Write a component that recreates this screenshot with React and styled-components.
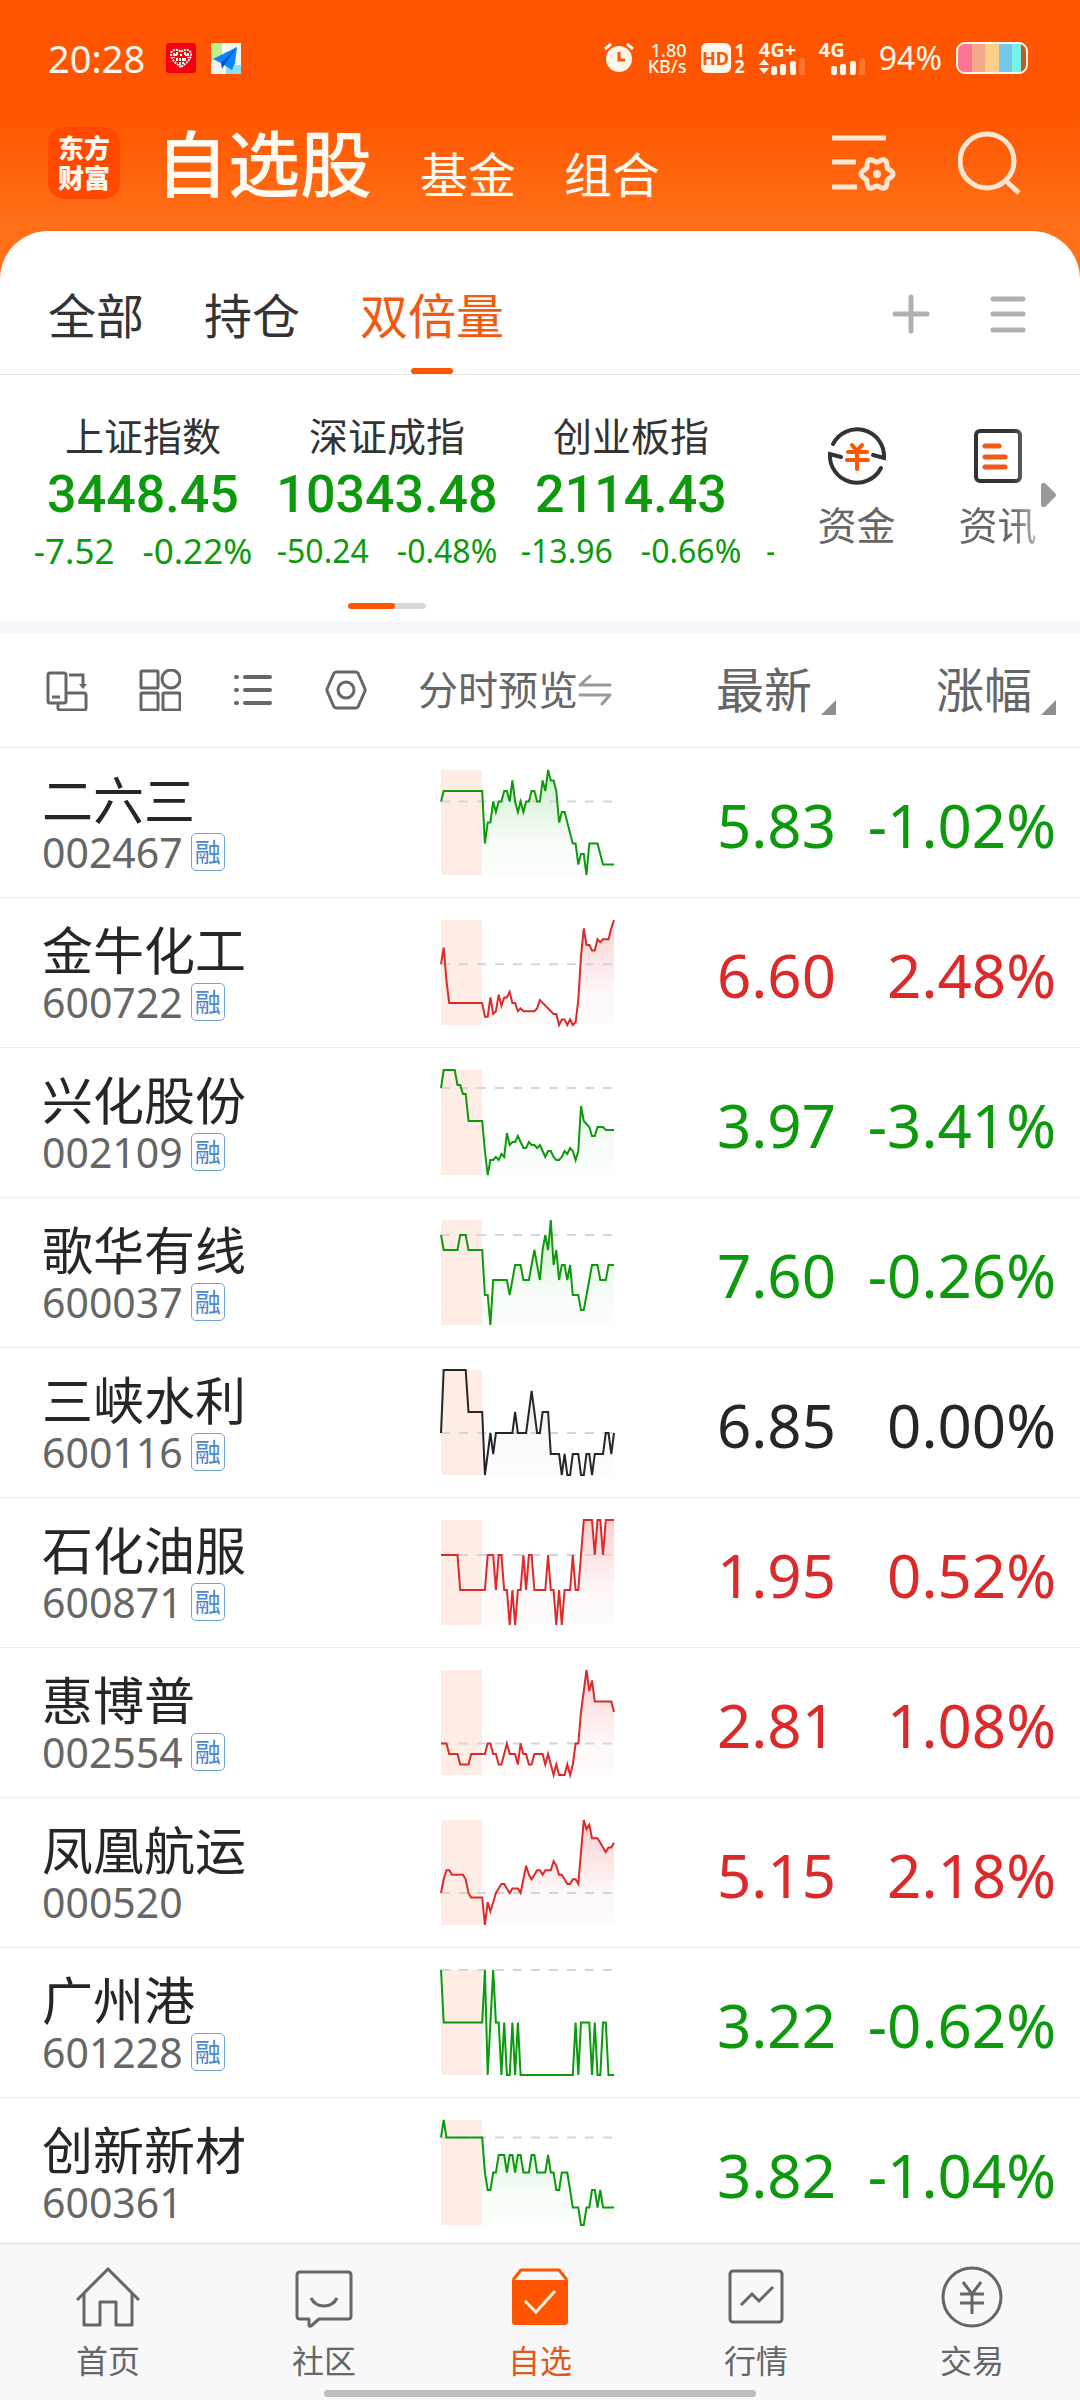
import React, { useId } from "react";
import styled, { createGlobalStyle } from "styled-components";

const GREEN = "#0c9a0c";
const RED = "#dc2a2a";
const INK = "#262626";
const GREY = "#666666";
const ORANGE = "#ff5500";
const TONES = { down: GREEN, up: RED, flat: INK };

const GlobalStyle = createGlobalStyle`
  *, *::before, *::after { box-sizing: border-box; }
  body {
    margin: 0;
    background: #fff;
    color: ${INK};
    font-family: "Noto Sans", "Noto Sans CJK SC", sans-serif;
  }
  button {
    margin: 0;
    padding: 0;
    border: 0;
    background: none;
    color: inherit;
    font: inherit;
    cursor: pointer;
  }
  a { color: inherit; text-decoration: none; }
  svg { display: block; flex: none; }
`;

const Screen = styled.div`
  display: flex;
  flex-direction: column;
  height: 100vh;
  background: linear-gradient(#ff5500 0, #ff5500 112px, #ff7018 224px);
`;

/* ---------- status bar ---------- */

const StatusBar = styled.div`
  display: flex;
  align-items: center;
  height: 116px;
  padding: 0 52px 0 48px;
  color: #fff6ec;
`;

const Clock = styled.span`
  margin-right: 21px;
  font-size: 38px;
  line-height: 40px;
`;

const NoticeIcons = styled.div`
  display: flex;
  flex: 1;
  gap: 15px;
`;

const StatusItems = styled.div`
  display: flex;
  align-items: center;
  gap: 14px;
`;

const TinyStack = styled.div`
  display: flex;
  flex-direction: column;
  align-items: ${(p) => p.$align || "flex-end"};
  font-size: ${(p) => p.$size || 18}px;
  line-height: 16px;
  font-weight: ${(p) => (p.$bold ? 700 : 500)};
`;

const HdGroup = styled.div`
  display: flex;
  align-items: center;
  gap: 4px;
`;

const HdBox = styled.span`
  width: 30px;
  height: 30px;
  border-radius: 6px;
  background: #fff6ec;
  color: ${ORANGE};
  font-size: 18px;
  font-weight: 700;
  line-height: 30px;
  text-align: center;
`;

const Percent = styled.span`
  font-size: 32px;
  line-height: 40px;
`;

/* ---------- title bar ---------- */

const TitleBar = styled.header`
  display: flex;
  align-items: flex-end;
  height: 115px;
  padding: 0 58px 32px 48px;
  color: #fffaf2;
`;

const Brand = styled.div`
  width: 72px;
  height: 72px;
  margin-right: 36px;
  padding: 6px 0;
  border-radius: 16px;
  background: #ff4800;
  font-size: 26px;
  font-weight: 900;
  line-height: 30px;
  text-align: center;
`;

const Sections = styled.nav`
  display: flex;
  flex: 1;
  align-items: flex-end;
  gap: 48px;
`;

const Section = styled.button`
  font-size: ${(p) => (p.$current ? 72 : 48)}px;
  font-weight: ${(p) => (p.$current ? 500 : 400)};
  line-height: ${(p) => (p.$current ? 72 : 48)}px;
  white-space: nowrap;
`;

const TitleActions = styled.div`
  display: flex;
  align-items: center;
  gap: 62px;
  height: 72px;
  color: #ffe6d2;
`;

/* ---------- white sheet ---------- */

const Sheet = styled.main`
  display: flex;
  flex: 1;
  flex-direction: column;
  min-height: 0;
  overflow: hidden;
  border-radius: 48px 48px 0 0;
  background: #fff;
`;

const GroupBar = styled.div`
  display: flex;
  flex: none;
  align-items: center;
  height: 144px;
  padding: 0 54px 0 48px;
  border-bottom: 1px solid #e4e4e4;
`;

const Groups = styled.div`
  display: flex;
  flex: 1;
  align-self: stretch;
  gap: 60px;
`;

const Group = styled.button`
  display: flex;
  flex-direction: column;
  align-items: center;
  justify-content: flex-end;
  color: ${(p) => (p.$current ? "#f25a12" : "#333333")};
  font-size: 48px;
  line-height: 60px;
  white-space: nowrap;

  &::after {
    content: "";
    width: 42px;
    height: 6px;
    margin-top: 22px;
    border-radius: 3px;
    background: ${(p) => (p.$current ? ORANGE : "transparent")};
  }
`;

const GroupActions = styled.div`
  display: flex;
  align-items: center;
  gap: 60px;
  padding-top: 22px;
`;

/* ---------- indices ---------- */

const Overview = styled.section`
  display: flex;
  flex: none;
  height: 258px;
  border-bottom: 12px solid #f5f6f9;
`;

const IndexPane = styled.div`
  flex: 1;
  min-width: 0;
  padding-top: 38px;
  overflow: hidden;
`;

const IndexStrip = styled.div`
  display: flex;
  padding-left: 21px;
`;

const IndexCard = styled.div`
  display: flex;
  flex: 0 0 244px;
  flex-direction: column;
  align-items: center;
  gap: 5px;
  color: ${GREEN};
  white-space: nowrap;
`;

const IndexName = styled.span`
  color: #333333;
  font-size: 39px;
  line-height: 46px;
`;

const IndexValue = styled.span`
  font-family: Roboto, "Noto Sans", sans-serif;
  font-size: 52px;
  font-weight: 500;
  line-height: 62px;
`;

const IndexChange = styled.span`
  display: flex;
  gap: 28px;
  font-size: ${(p) => (p.$large ? 35 : 32)}px;
  line-height: 40px;
`;

const NextCard = styled.div`
  display: flex;
  flex: none;
  align-items: flex-end;
  width: 21px;
  padding-left: 13px;
  overflow: hidden;
  color: ${GREEN};
  font-size: 32px;
  line-height: 40px;
`;

const Pager = styled.div`
  display: flex;
  width: 78px;
  height: 6px;
  margin: 32px auto 0;
  overflow: hidden;
  border-radius: 3px;
  background: #d5d8dd;

  &::before {
    content: "";
    width: 60%;
    border-radius: 3px;
    background: ${ORANGE};
  }
`;

const Shortcuts = styled.div`
  position: relative;
  display: flex;
  flex: none;
  padding: 48px 12px 0;
`;

const Shortcut = styled.a`
  display: flex;
  flex-direction: column;
  align-items: center;
  gap: 13px;
  width: 141px;
  color: ${GREY};
  font-size: 39px;
  line-height: 46px;
  ${(p) =>
    p.$fading &&
    "mask-image: linear-gradient(to right, #000 60%, rgba(0, 0, 0, 0.4) 82%);"}
`;

const MoreArrow = styled.button`
  position: absolute;
  top: 108px;
  right: 24px;
  color: #999999;
`;

/* ---------- stock table ---------- */

const Stocks = styled.div`
  flex: 1;
  min-height: 0;
  overflow: hidden;
`;

const Table = styled.table`
  width: 100%;
  border-spacing: 0;
  table-layout: fixed;
`;

const HeadCell = styled.th`
  width: ${(p) => p.$width || "auto"};
  height: 115px;
  padding: 0 ${(p) => p.$right || 0}px 0 ${(p) => p.$left || 0}px;
  border-bottom: 1px solid #ececec;
  color: ${GREY};
  font-weight: 400;
  text-align: left;
`;

const Tools = styled.div`
  display: flex;
  gap: 51px;
`;

const PreviewToggle = styled.button`
  display: flex;
  align-items: center;
  font-size: 40px;
  line-height: 50px;
  white-space: nowrap;
`;

const SortButton = styled.button`
  display: flex;
  align-items: flex-end;
  gap: 9px;
  margin-left: auto;
  font-size: 48px;
  line-height: 50px;
  white-space: nowrap;

  &::after {
    content: "";
    width: 15px;
    height: 15px;
    background: #8e8e93;
    clip-path: polygon(100% 0, 100% 100%, 0 100%);
  }
`;

const Cell = styled.td`
  height: 150px;
  padding: 6px 0 0;
  border-bottom: 1px solid #ececec;
  vertical-align: middle;
`;

const NameCell = styled(Cell)`
  padding-left: 42px;
`;

const ChartCell = styled(Cell)`
  padding: 0 0 0 23px;
`;

const NumberCell = styled(Cell)`
  padding: 4px ${(p) => p.$right || 0}px 0 0;
  color: ${(p) => TONES[p.$tone]};
  font-size: 60px;
  line-height: 72px;
  text-align: right;
  white-space: nowrap;
`;

const StockName = styled.div`
  font-size: 51px;
  line-height: 52px;
`;

const StockCode = styled.div`
  display: flex;
  align-items: center;
  gap: 8px;
  color: ${GREY};
  font-size: 41px;
  line-height: 52px;
`;

const MarginTag = styled.span`
  width: 34px;
  height: 38px;
  border: 1px solid #6ea3da;
  border-radius: 5px;
  color: #4a86cc;
  font-size: 26px;
  line-height: 36px;
  text-align: center;
`;

/* ---------- bottom navigation ---------- */

const BottomBar = styled.footer`
  flex: none;
  height: 157px;
  padding-top: 21px;
  border-top: 1px solid #e2e2e4;
  background: #f8f8fa;
`;

const BottomNav = styled.nav`
  display: grid;
  grid-template-columns: repeat(5, 1fr);
`;

const NavLink = styled.a`
  display: flex;
  flex-direction: column;
  align-items: center;
  gap: 12px;
  color: ${(p) => (p.$current ? "#e2581a" : GREY)};
  font-size: 32px;
  line-height: 40px;
`;

const HomeHandle = styled.div`
  width: 40%;
  height: 7px;
  margin: 9px auto 0;
  border-radius: 4px;
  background: #bdbdbd;
`;

/* ---------- icons ---------- */

const Icon = ({ w, h, sw = 3, children, ...rest }) => (
  <svg
    width={w}
    height={h}
    viewBox={`0 0 ${w} ${h}`}
    fill="none"
    stroke="currentColor"
    strokeWidth={sw}
    aria-hidden="true"
    {...rest}
  >
    {children}
  </svg>
);

const HeartAppIcon = () => (
  <Icon w={30} h={30} sw={2}>
    <rect width="30" height="30" rx="3" fill="#f2000d" stroke="none" />
    <path
      d="M15 24C9 20 5 16 5 11C5 7 11 5 15 9C19 5 25 7 25 11C25 16 21 20 15 24Z"
      stroke="#fff"
      strokeDasharray="2 1"
    />
    <path
      d="M8 10V15M11 9V13M11 15V19M14 12H16M14 15V22M17 15V21M19 9V13M19 15V18M22 10V15M8 12H11M19 12H23"
      stroke="#fff"
      strokeDasharray="3 1"
    />
  </Icon>
);

const MapAppIcon = () => (
  <Icon w={30} h={31} stroke="none">
    <rect width="30" height="31" fill="#f2f4f0" />
    <path d="M0 0H11V13L0 18Z" fill="#bdf08c" />
    <path d="M15 22H30V31H15Z" fill="#8ae0fa" />
    <path d="M11 0H14V31H11Z" fill="#fff" />
    <path d="M26 4L2 16L10 20L21 27L24 20Z" fill="#0a84ff" />
    <path d="M26 4L10 20L11 26L14 21Z" fill="#0654c8" />
  </Icon>
);

const AlarmIcon = () => (
  <Icon w={30} h={30}>
    <circle cx="15" cy="16" r="13" fill="currentColor" stroke="none" />
    <path d="M15 9V17H21" stroke={ORANGE} />
    <path d="M1 6L7 1M29 6L23 1" />
  </Icon>
);

const Bars = ({ arrows }) => (
  <Icon w={46} h={17} stroke="none" fill="currentColor">
    {arrows && <path d="M0 7L5 1L10 7ZM0 10L5 16L10 10Z" />}
    <g transform="translate(12 0)">
      <rect x="0" y="8" width="6" height="9" rx="2" />
      <rect x="9" y="6" width="6" height="11" rx="2" />
      <rect x="19" y="3" width="6" height="14" rx="2" />
      <rect x="28" y="0" width="6" height="17" rx="2" opacity="0.2" />
    </g>
  </Icon>
);

const BatteryIcon = () => (
  <Icon w={72} h={32} stroke="none">
    <clipPath id="cell">
      <rect x="2" y="2" width="68" height="28" rx="7" />
    </clipPath>
    <g clipPath="url(#cell)">
      <rect x="0" width="16" height="32" fill="#fb7592" />
      <rect x="16" width="13" height="32" fill="#f4a88a" />
      <rect x="29" width="14" height="32" fill="#fdd08a" />
      <rect x="43" width="13" height="32" fill="#74c6ea" />
      <rect x="56" width="9" height="32" fill="#74f4e6" />
      <rect x="65" width="7" height="32" fill="#bf5a2a" />
    </g>
    <rect x="1" y="1" width="70" height="30" rx="8" stroke="#fff6ec" strokeWidth="2" />
  </Icon>
);

const gearPath = (() => {
  const points = [];
  for (let i = 0; i <= 72; i += 1) {
    const a = (i / 72) * Math.PI * 2;
    const r = 14 + 2 * Math.cos(6 * a);
    points.push(`${(45 + r * Math.cos(a)).toFixed(1)} ${(40 + r * Math.sin(a)).toFixed(1)}`);
  }
  return `M${points.join("L")}Z`;
})();

const FilterIcon = () => (
  <Icon w={64} h={58} sw={5}>
    <path d="M0 4H54M0 28H24M0 53H25" />
    <path d={gearPath} strokeLinejoin="round" />
    <circle cx="45" cy="40" r="4" fill="currentColor" stroke="none" />
  </Icon>
);

const SearchIcon = () => (
  <Icon w={64} h={64} sw={5}>
    <circle cx="29" cy="30" r="27" />
    <path d="M47 49L61 62" />
  </Icon>
);

const PlusIcon = () => (
  <Icon w={38} h={40} sw={5} stroke="#b0b0b0" strokeLinecap="round">
    <path d="M19 3V37M3 20H35" />
  </Icon>
);

const MenuIcon = () => (
  <Icon w={36} h={40} sw={5} stroke="#b0b0b0" strokeLinecap="round">
    <path d="M3 5H33M3 20H33M3 36H33" />
  </Icon>
);

const FundsIcon = () => (
  <Icon w={66} h={66} sw={4} stroke="#333">
    <path d="M9 21A27 27 0 0 1 60 35L49 32" strokeLinecap="round" />
    <path d="M57 45A27 27 0 0 1 6 31L17 34" strokeLinecap="round" />
    <path d="M28 22L33 28L38 22M24 29H43M23 37H44M33 28V46" stroke={ORANGE} strokeLinecap="round" />
  </Icon>
);

const NewsIcon = () => (
  <Icon w={66} h={66} sw={4} stroke="#333">
    <rect x="11" y="8" width="44" height="50" rx="4" />
    <path d="M20 23H34M20 34H40M20 44H40" stroke="#f05a14" strokeWidth="5" strokeLinecap="round" />
  </Icon>
);

const ArrowIcon = () => (
  <Icon w={15} h={24} stroke="none" fill="currentColor">
    <path d="M0 2Q0 0 2 0H4L14 10Q16 12 14 14L4 24H2Q0 24 0 22Z" />
  </Icon>
);

const RotateIcon = () => (
  <Icon w={42} h={42}>
    <rect x="2" y="4" width="18" height="30" rx="2" />
    <path d="M6 28H14" />
    <path d="M20 24H38Q40 24 40 26V39Q40 41 38 41H14Q12 41 12 39V34" />
    <path d="M23 6H37V17" />
    <path d="M33 15H41L37 20Z" fill="currentColor" stroke="none" />
  </Icon>
);

const GridIcon = () => (
  <Icon w={42} h={42}>
    <rect x="2" y="2" width="17" height="17" rx="1" />
    <circle cx="32" cy="10" r="9" />
    <rect x="2" y="24" width="17" height="17" rx="1" />
    <rect x="24" y="24" width="17" height="17" rx="1" />
  </Icon>
);

const ListIcon = () => (
  <Icon w={42} h={42} sw={4} strokeLinecap="round">
    <path d="M4 8H5M4 21H5M4 34H5M13 8H38M13 21H38M13 34H38" />
  </Icon>
);

const HexIcon = () => (
  <Icon w={42} h={42}>
    <path d="M11 3H31L33 4L40 20V22L33 38L31 39H11L9 38L2 22V20L9 4Z" strokeLinejoin="round" />
    <circle cx="21" cy="21" r="8" />
  </Icon>
);

const SwapIcon = () => (
  <Icon w={34} h={34} stroke="#999" strokeLinecap="round">
    <path d="M12 3L2 12H32M2 22H32L24 31" strokeLinejoin="round" />
  </Icon>
);

const HomeIcon = () => (
  <Icon w={64} h={64}>
    <path d="M1 35L32 4L63 35" />
    <path d="M8 29V60H24V37H40V60H56V29" strokeLinejoin="round" />
  </Icon>
);

const ChatIcon = () => (
  <Icon w={64} h={64}>
    <path
      d="M8 7H56Q59 7 59 10V51Q59 54 56 54H27L19 61Q17 62 17 60V54H8Q5 54 5 51V10Q5 7 8 7Z"
      strokeLinejoin="round"
    />
    <path d="M19 33Q23 41 32 41Q41 41 45 33" />
  </Icon>
);

const PickIcon = () => (
  <Icon w={64} h={64} stroke={ORANGE}>
    <path d="M5 15L13 5H51L59 15" strokeLinejoin="round" />
    <path d="M4 15H60V57Q60 60 57 60H7Q4 60 4 57Z" fill={ORANGE} stroke="none" />
    <path d="M17 36L28 47L47 26" stroke="#fff0e0" />
  </Icon>
);

const QuoteIcon = () => (
  <Icon w={64} h={64}>
    <rect x="6" y="6" width="52" height="51" rx="3" />
    <path d="M17 40L28 29L35 36L49 22" />
  </Icon>
);

const TradeIcon = () => (
  <Icon w={64} h={64}>
    <circle cx="32" cy="32" r="29" />
    <path d="M23 17L32 29L41 17M20 29H44M20 38H44M32 29V49" />
  </Icon>
);

/* ---------- intraday sparkline ---------- */

const CHART_W = 173;
const CHART_H = 105;
const LAST_SLOT = 63;
const PRE_OPEN = 15;

function Sparkline({ tone, depth, base, points, label }) {
  const id = useId();
  const color = TONES[tone];
  const place = ([slot, level]) =>
    `${((slot / LAST_SLOT) * CHART_W).toFixed(1)},${((level / depth) * CHART_H).toFixed(1)}`;
  const open = points.filter(([slot]) => slot >= PRE_OPEN);
  const openX = ((PRE_OPEN / LAST_SLOT) * CHART_W).toFixed(1);
  const baseY = (base / depth) * CHART_H;
  const fill = tone === "up" ? "#f58a8a" : tone === "down" ? "#86d486" : "#b8b8b8";
  return (
    <svg
      width={CHART_W}
      height={CHART_H}
      viewBox={`0 0 ${CHART_W} ${CHART_H}`}
      overflow="visible"
      role="img"
      aria-label={label}
    >
      <linearGradient id={id} gradientUnits="userSpaceOnUse" x1="0" y1="0" x2="0" y2={CHART_H}>
        <stop offset="0" stopColor={fill} stopOpacity="0.4" />
        <stop offset="0.7" stopColor={fill} stopOpacity="0.06" />
        <stop offset="1" stopColor={fill} stopOpacity="0.03" />
      </linearGradient>
      <rect width="41" height={CHART_H} fill="#ffede5" />
      <polygon
        points={`${openX},${CHART_H} ${open.map(place).join(" ")} ${CHART_W},${CHART_H}`}
        fill={`url(#${id})`}
      />
      <line x1="0" x2={CHART_W} y1={baseY} y2={baseY} stroke="#d3d5d9" strokeWidth="2" strokeDasharray="9 9" />
      <polyline points={points.map(place).join(" ")} fill="none" stroke={color} strokeWidth="2" />
    </svg>
  );
}

/* ---------- data ---------- */

const INDICES = [
  { name: "上证指数", value: "3448.45", change: "-7.52", rate: "-0.22%", large: true },
  { name: "深证成指", value: "10343.48", change: "-50.24", rate: "-0.48%" },
  { name: "创业板指", value: "2114.43", change: "-13.96", rate: "-0.66%" },
];

const STOCKS = [
  {
    name: "二六三", code: "002467", margin: true, price: "5.83", rate: "-1.02%", tone: "down", depth: 10, base: 3,
    points: [[0,3],[1,2],[15,2],[16,7],[17,5],[18,5],[19,3],[20,4],[21,3],[22,3],[23,2],[24,2],[25,3],[26,1],[27,3],[28,4],[29,3],[30,4],[31,3],[32,3],[33,2],[34,2],[35,3],[36,3],[37,1],[38,2],[39,0],[40,1],[41,1],[42,2],[43,5],[44,4],[45,4],[48,7],[49,7],[50,9],[51,8],[52,8],[53,10],[54,7],[57,7],[59,9],[63,9]],
  },
  {
    name: "金牛化工", code: "600722", margin: true, price: "6.60", rate: "2.48%", tone: "up", depth: 38, base: 16,
    points: [[0,16],[1,10],[2,22],[3,30],[15,30],[16,35],[17,35],[18,28],[19,34],[20,33],[21,27],[22,31],[23,28],[24,28],[25,26],[26,30],[27,30],[28,33],[29,32],[30,33],[34,33],[35,32],[36,29],[37,30],[41,34],[42,34],[43,38],[44,36],[45,36],[46,38],[47,36],[48,38],[49,37],[50,29],[51,13],[52,3],[53,9],[54,9],[55,11],[56,11],[57,7],[58,8],[59,7],[61,7],[62,3],[63,0]],
  },
  {
    name: "兴化股份", code: "002109", margin: true, price: "3.97", rate: "-3.41%", tone: "down", depth: 35, base: 6,
    points: [[0,6],[1,0],[5,0],[6,5],[7,5],[8,8],[9,8],[10,17],[15,17],[16,27],[17,35],[18,30],[19,30],[20,29],[21,30],[22,28],[23,29],[24,21],[25,25],[26,24],[27,24],[28,22],[29,24],[30,26],[31,26],[32,24],[33,25],[34,25],[35,26],[36,25],[37,27],[38,29],[39,27],[40,27],[41,29],[42,30],[43,30],[44,29],[45,27],[46,28],[47,26],[48,27],[49,30],[50,27],[51,12],[52,17],[53,18],[54,19],[55,22],[56,22],[57,19],[59,19],[60,20],[63,20]],
  },
  {
    name: "歌华有线", code: "600037", margin: true, price: "7.60", rate: "-0.26%", tone: "down", depth: 7, base: 1,
    points: [[0,1],[1,2],[6,2],[7,1],[9,1],[10,2],[15,2],[16,5],[17,5],[18,7],[19,4],[24,4],[25,5],[26,4],[27,3],[29,3],[30,4],[32,4],[33,3],[34,2],[35,3],[36,4],[37,2],[38,1],[39,2],[40,0],[41,3],[42,2],[43,4],[44,3],[45,3],[46,4],[47,3],[48,5],[50,5],[51,6],[52,6],[53,5],[54,4],[55,3],[57,3],[58,4],[60,4],[61,3],[63,3]],
  },
  {
    name: "三峡水利", code: "600116", margin: true, price: "6.85", rate: "0.00%", tone: "flat", depth: 5, base: 3,
    points: [[0,3],[1,0],[9,0],[10,2],[15,2],[16,5],[17,4],[18,3],[19,4],[20,3],[26,3],[27,2],[28,3],[31,3],[32,2],[33,1],[34,2],[35,3],[36,3],[37,2],[39,2],[40,4],[43,4],[44,5],[45,4],[46,5],[47,5],[48,4],[50,4],[51,5],[52,5],[53,4],[54,4],[55,5],[56,4],[59,4],[60,3],[61,3],[62,4],[63,3]],
  },
  {
    name: "石化油服", code: "600871", margin: true, price: "1.95", rate: "0.52%", tone: "up", depth: 3, base: 1,
    points: [[0,1],[6,1],[7,2],[16,2],[17,1],[19,1],[20,2],[21,1],[22,1],[23,2],[24,2],[25,3],[26,2],[27,3],[28,2],[29,2],[30,1],[31,2],[32,1],[33,1],[34,2],[38,2],[39,1],[40,2],[41,2],[42,3],[43,2],[44,3],[45,2],[47,2],[48,1],[49,2],[50,2],[51,1],[52,0],[55,0],[56,1],[57,0],[58,0],[59,1],[60,0],[63,0]],
  },
  {
    name: "惠博普", code: "002554", margin: true, price: "2.81", rate: "1.08%", tone: "up", depth: 10, base: 7,
    points: [[0,7],[2,7],[3,8],[6,8],[7,9],[10,9],[11,8],[16,8],[17,7],[18,7],[19,8],[20,8],[21,9],[22,9],[23,8],[24,7],[25,8],[27,8],[28,9],[29,7],[30,8],[31,8],[32,9],[33,9],[34,8],[37,8],[38,9],[39,8],[40,9],[41,10],[42,9],[43,10],[45,10],[46,9],[47,10],[48,9],[49,7],[50,7],[51,4],[52,2],[53,0],[54,2],[55,1],[56,3],[62,3],[63,4]],
  },
  {
    name: "凤凰航运", code: "000520", margin: false, price: "5.15", rate: "2.18%", tone: "up", depth: 23, base: 16,
    points: [[0,16],[1,13],[2,11],[3,11],[4,12],[8,12],[9,13],[10,16],[11,17],[15,17],[16,23],[17,18],[18,20],[19,18],[20,16],[21,15],[22,14],[23,14],[24,15],[25,16],[26,15],[28,15],[29,16],[30,13],[31,10],[32,12],[33,13],[34,12],[35,11],[36,11],[37,12],[38,11],[40,11],[41,9],[42,10],[43,12],[44,12],[45,13],[46,14],[47,14],[48,13],[49,13],[50,14],[51,7],[52,0],[53,2],[54,1],[55,4],[57,4],[58,5],[59,6],[60,7],[61,6],[62,6],[63,5]],
  },
  {
    name: "广州港", code: "601228", margin: true, price: "3.22", rate: "-0.62%", tone: "down", depth: 2, base: 0,
    points: [[0,0],[1,1],[15,1],[16,0],[17,2],[18,1],[19,0],[20,1],[21,1],[22,2],[23,1],[24,2],[25,2],[26,1],[27,2],[28,1],[29,2],[48,2],[49,1],[50,2],[51,1],[54,1],[55,2],[56,1],[57,2],[58,2],[59,1],[60,1],[61,2],[63,2]],
  },
  {
    name: "创新新材", code: "600361", margin: false, price: "3.82", rate: "-1.04%", tone: "down", depth: 6, base: 1,
    points: [[0,1],[1,0],[2,1],[15,1],[16,3],[17,4],[18,4],[19,3],[20,3],[21,2],[23,2],[24,3],[25,2],[26,2],[27,3],[28,2],[29,2],[30,3],[32,3],[33,2],[34,2],[35,3],[38,3],[39,2],[40,3],[41,3],[42,4],[43,4],[44,3],[46,3],[47,4],[48,5],[50,5],[51,6],[52,6],[53,5],[54,5],[55,4],[56,4],[57,5],[58,4],[59,5],[63,5]],
  },
];

const NAV = [
  { label: "首页", icon: HomeIcon },
  { label: "社区", icon: ChatIcon },
  { label: "自选", icon: PickIcon, current: true },
  { label: "行情", icon: QuoteIcon },
  { label: "交易", icon: TradeIcon },
];

export default function App() {
  return (
    <Screen>
      <GlobalStyle />
      <StatusBar>
        <Clock>20:28</Clock>
        <NoticeIcons>
          <HeartAppIcon />
          <MapAppIcon />
        </NoticeIcons>
        <StatusItems>
          <AlarmIcon />
          <TinyStack>
            <span>1.80</span>
            <span>KB/s</span>
          </TinyStack>
          <HdGroup>
            <HdBox>HD</HdBox>
            <TinyStack $bold>
              <span>1</span>
              <span>2</span>
            </TinyStack>
          </HdGroup>
          <TinyStack $bold $size={20} $align="flex-start">
            <span>4G+</span>
            <Bars arrows />
          </TinyStack>
          <TinyStack $bold $size={20} $align="flex-start">
            <span>4G</span>
            <Bars />
          </TinyStack>
          <Percent>94%</Percent>
          <BatteryIcon />
        </StatusItems>
      </StatusBar>

      <TitleBar>
        <Brand>
          东方
          <br />
          财富
        </Brand>
        <Sections>
          <Section $current>自选股</Section>
          <Section>基金</Section>
          <Section>组合</Section>
        </Sections>
        <TitleActions>
          <button aria-label="列表设置">
            <FilterIcon />
          </button>
          <button aria-label="搜索">
            <SearchIcon />
          </button>
        </TitleActions>
      </TitleBar>

      <Sheet>
        <GroupBar>
          <Groups>
            <Group>全部</Group>
            <Group>持仓</Group>
            <Group $current>双倍量</Group>
          </Groups>
          <GroupActions>
            <button aria-label="添加">
              <PlusIcon />
            </button>
            <button aria-label="分组管理">
              <MenuIcon />
            </button>
          </GroupActions>
        </GroupBar>

        <Overview>
          <IndexPane>
            <IndexStrip>
              {INDICES.map((item) => (
                <IndexCard key={item.name}>
                  <IndexName>{item.name}</IndexName>
                  <IndexValue>{item.value}</IndexValue>
                  <IndexChange $large={item.large}>
                    <span>{item.change}</span>
                    <span>{item.rate}</span>
                  </IndexChange>
                </IndexCard>
              ))}
              <NextCard>-</NextCard>
            </IndexStrip>
            <Pager />
          </IndexPane>
          <Shortcuts>
            <Shortcut href="#funds">
              <FundsIcon />
              资金
            </Shortcut>
            <Shortcut href="#news" $fading>
              <NewsIcon />
              资讯
            </Shortcut>
            <MoreArrow aria-label="更多">
              <ArrowIcon />
            </MoreArrow>
          </Shortcuts>
        </Overview>

        <Stocks>
          <Table>
            <thead>
              <tr>
                <HeadCell $left={46}>
                  <Tools>
                    <button aria-label="横屏">
                      <RotateIcon />
                    </button>
                    <button aria-label="宫格">
                      <GridIcon />
                    </button>
                    <button aria-label="列表">
                      <ListIcon />
                    </button>
                    <button aria-label="设置">
                      <HexIcon />
                    </button>
                  </Tools>
                </HeadCell>
                <HeadCell $width="222px">
                  <PreviewToggle>
                    分时预览
                    <SwapIcon />
                  </PreviewToggle>
                </HeadCell>
                <HeadCell $width="196px">
                  <SortButton>最新</SortButton>
                </HeadCell>
                <HeadCell $width="244px" $right={24}>
                  <SortButton>涨幅</SortButton>
                </HeadCell>
              </tr>
            </thead>
            <tbody>
              {STOCKS.map((s) => (
                <tr key={s.code}>
                  <NameCell>
                    <StockName>{s.name}</StockName>
                    <StockCode>
                      {s.code}
                      {s.margin && <MarginTag>融</MarginTag>}
                    </StockCode>
                  </NameCell>
                  <ChartCell>
                    <Sparkline
                      tone={s.tone}
                      depth={s.depth}
                      base={s.base}
                      points={s.points}
                      label={`${s.name}分时`}
                    />
                  </ChartCell>
                  <NumberCell $tone={s.tone}>{s.price}</NumberCell>
                  <NumberCell $tone={s.tone} $right={24}>
                    {s.rate}
                  </NumberCell>
                </tr>
              ))}
            </tbody>
          </Table>
        </Stocks>
      </Sheet>

      <BottomBar>
        <BottomNav>
          {NAV.map(({ label, icon: Glyph, current }) => (
            <NavLink key={label} href={`#${label}`} $current={current}>
              <Glyph />
              {label}
            </NavLink>
          ))}
        </BottomNav>
        <HomeHandle />
      </BottomBar>
    </Screen>
  );
}
